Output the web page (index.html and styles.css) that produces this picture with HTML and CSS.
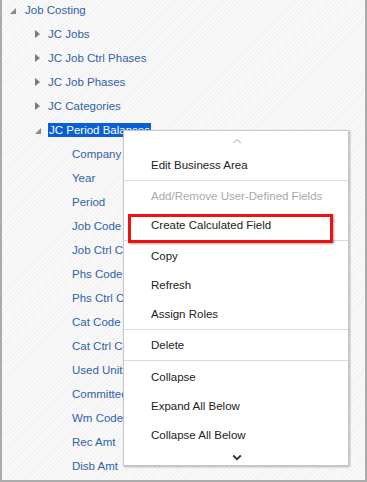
FILE: index.html
```html
<!DOCTYPE html>
<html>
<head>
<meta charset="utf-8">
<link rel="stylesheet" href="styles.css">
</head>
<body>
<div class="frame">
  <ul class="tree">
    <li class="row lvl0"><span class="tw open"></span><span class="lbl">Job Costing</span></li>
    <li class="row lvl1"><span class="tw closed"></span><span class="lbl">JC Jobs</span></li>
    <li class="row lvl1"><span class="tw closed"></span><span class="lbl">JC Job Ctrl Phases</span></li>
    <li class="row lvl1"><span class="tw closed"></span><span class="lbl">JC Job Phases</span></li>
    <li class="row lvl1"><span class="tw closed"></span><span class="lbl">JC Categories</span></li>
    <li class="row lvl1"><span class="tw open"></span><span class="lbl selected">JC Period Balances</span></li>
    <li class="row lvl2"><span class="lbl">Company</span></li>
    <li class="row lvl2"><span class="lbl">Year</span></li>
    <li class="row lvl2"><span class="lbl">Period</span></li>
    <li class="row lvl2"><span class="lbl">Job Code</span></li>
    <li class="row lvl2"><span class="lbl">Job Ctrl Code</span></li>
    <li class="row lvl2"><span class="lbl">Phs Code</span></li>
    <li class="row lvl2"><span class="lbl">Phs Ctrl Code</span></li>
    <li class="row lvl2"><span class="lbl">Cat Code</span></li>
    <li class="row lvl2"><span class="lbl">Cat Ctrl Code</span></li>
    <li class="row lvl2"><span class="lbl">Used Units</span></li>
    <li class="row lvl2"><span class="lbl">Committed</span></li>
    <li class="row lvl2"><span class="lbl">Wm Code</span></li>
    <li class="row lvl2"><span class="lbl">Rec Amt</span></li>
    <li class="row lvl2"><span class="lbl">Disb Amt</span></li>
  </ul>

  <div class="menu">
    <div class="scroll up">
      <svg width="10" height="6" viewBox="0 0 10 6"><path d="M1 5 L5 1.5 L9 5" fill="none" stroke="#c9c9c9" stroke-width="1.3"/></svg>
    </div>
    <div class="item">Edit Business Area</div>
    <div class="sep"></div>
    <div class="item disabled">Add/Remove User-Defined Fields</div>
    <div class="item marked">Create Calculated Field</div>
    <div class="sep"></div>
    <div class="item">Copy</div>
    <div class="item">Refresh</div>
    <div class="item">Assign Roles</div>
    <div class="sep"></div>
    <div class="item">Delete</div>
    <div class="sep wide"></div>
    <div class="item">Collapse</div>
    <div class="item">Expand All Below</div>
    <div class="item">Collapse All Below</div>
    <div class="scroll down">
      <svg width="10" height="7" viewBox="0 0 10 7"><path d="M1.2 1.5 L5 5.2 L8.8 1.5" fill="none" stroke="#333" stroke-width="1.8"/></svg>
    </div>
  </div>
</div>
</body>
</html>
```

FILE: styles.css
```css
html, body {
  margin: 0;
  padding: 0;
}

body {
  font-family: "Liberation Sans", Arial, sans-serif;
  font-size: 11.5px;
}

.frame {
  position: relative;
  width: 367px;
  height: 482px;
  box-sizing: border-box;
  border-left: 2px solid #ababab;
  border-right: 2px solid #ababab;
  border-bottom: 2px solid #ababab;
  overflow: hidden;
  background-color: #f6f6f6;
  background-image: repeating-linear-gradient(135deg, #f1f1f1 0px, #f1f1f1 1px, #f9f9f9 1px, #f9f9f9 3px);
}

.tree {
  list-style: none;
  margin: -2px 0 0 0;
  padding: 0;
}

.row {
  display: flex;
  align-items: center;
  height: 24px;
  white-space: nowrap;
}

.lvl0 { padding-left: 8px; }
.lvl1 { padding-left: 33px; }
.lvl2 { padding-left: 70px; }

.tw {
  flex: none;
  display: flex;
  align-items: center;
  height: 24px;
}

.lvl0 .tw { width: 15px; }
.lvl1 .tw { width: 13px; }

.tw.open::before {
  content: "";
  display: block;
  width: 0;
  height: 0;
  margin-top: 2px;
  border-left: 6px solid transparent;
  border-bottom: 6px solid #8a8a8a;
}

.tw.closed::before {
  content: "";
  display: block;
  width: 0;
  height: 0;
  border-top: 4.5px solid transparent;
  border-bottom: 4.5px solid transparent;
  border-left: 5px solid #7a7a7a;
}

.lbl {
  color: #3261a8;
}

.lbl.selected {
  background: #0a5fd6;
  color: #ffffff;
  line-height: 14px;
  padding: 0 1px 0 1px;
  margin-top: -1px;
}

.menu {
  position: absolute;
  left: 121px;
  top: 130px;
  width: 226px;
  box-sizing: border-box;
  background: #ffffff;
  border: 1px solid #c3c7cc;
  box-shadow: 1px 1px 2px rgba(0, 0, 0, 0.28);
  color: #222222;
}

.scroll {
  display: flex;
  justify-content: center;
}

.scroll.up {
  height: 19px;
  align-items: center;
  padding-left: 2px;
}

.scroll.down {
  height: 16px;
  align-items: center;
  padding-left: 2px;
}

.item {
  position: relative;
  height: 29px;
  line-height: 30px;
  padding-left: 27px;
  white-space: nowrap;
}

.item.disabled {
  color: #a9a9a9;
}

.item.marked::after {
  content: "";
  position: absolute;
  left: 4px;
  top: 4px;
  width: 205px;
  height: 29px;
  box-sizing: border-box;
  border: 3px solid #ee1111;
  box-shadow: 1px 1px 2px rgba(0, 0, 0, 0.35);
}

.sep {
  height: 1px;
  margin-top: 1px;
  background: #d6dbe1;
}

.sep.wide {
  margin-top: 1px;
  margin-bottom: 1px;
}
```
